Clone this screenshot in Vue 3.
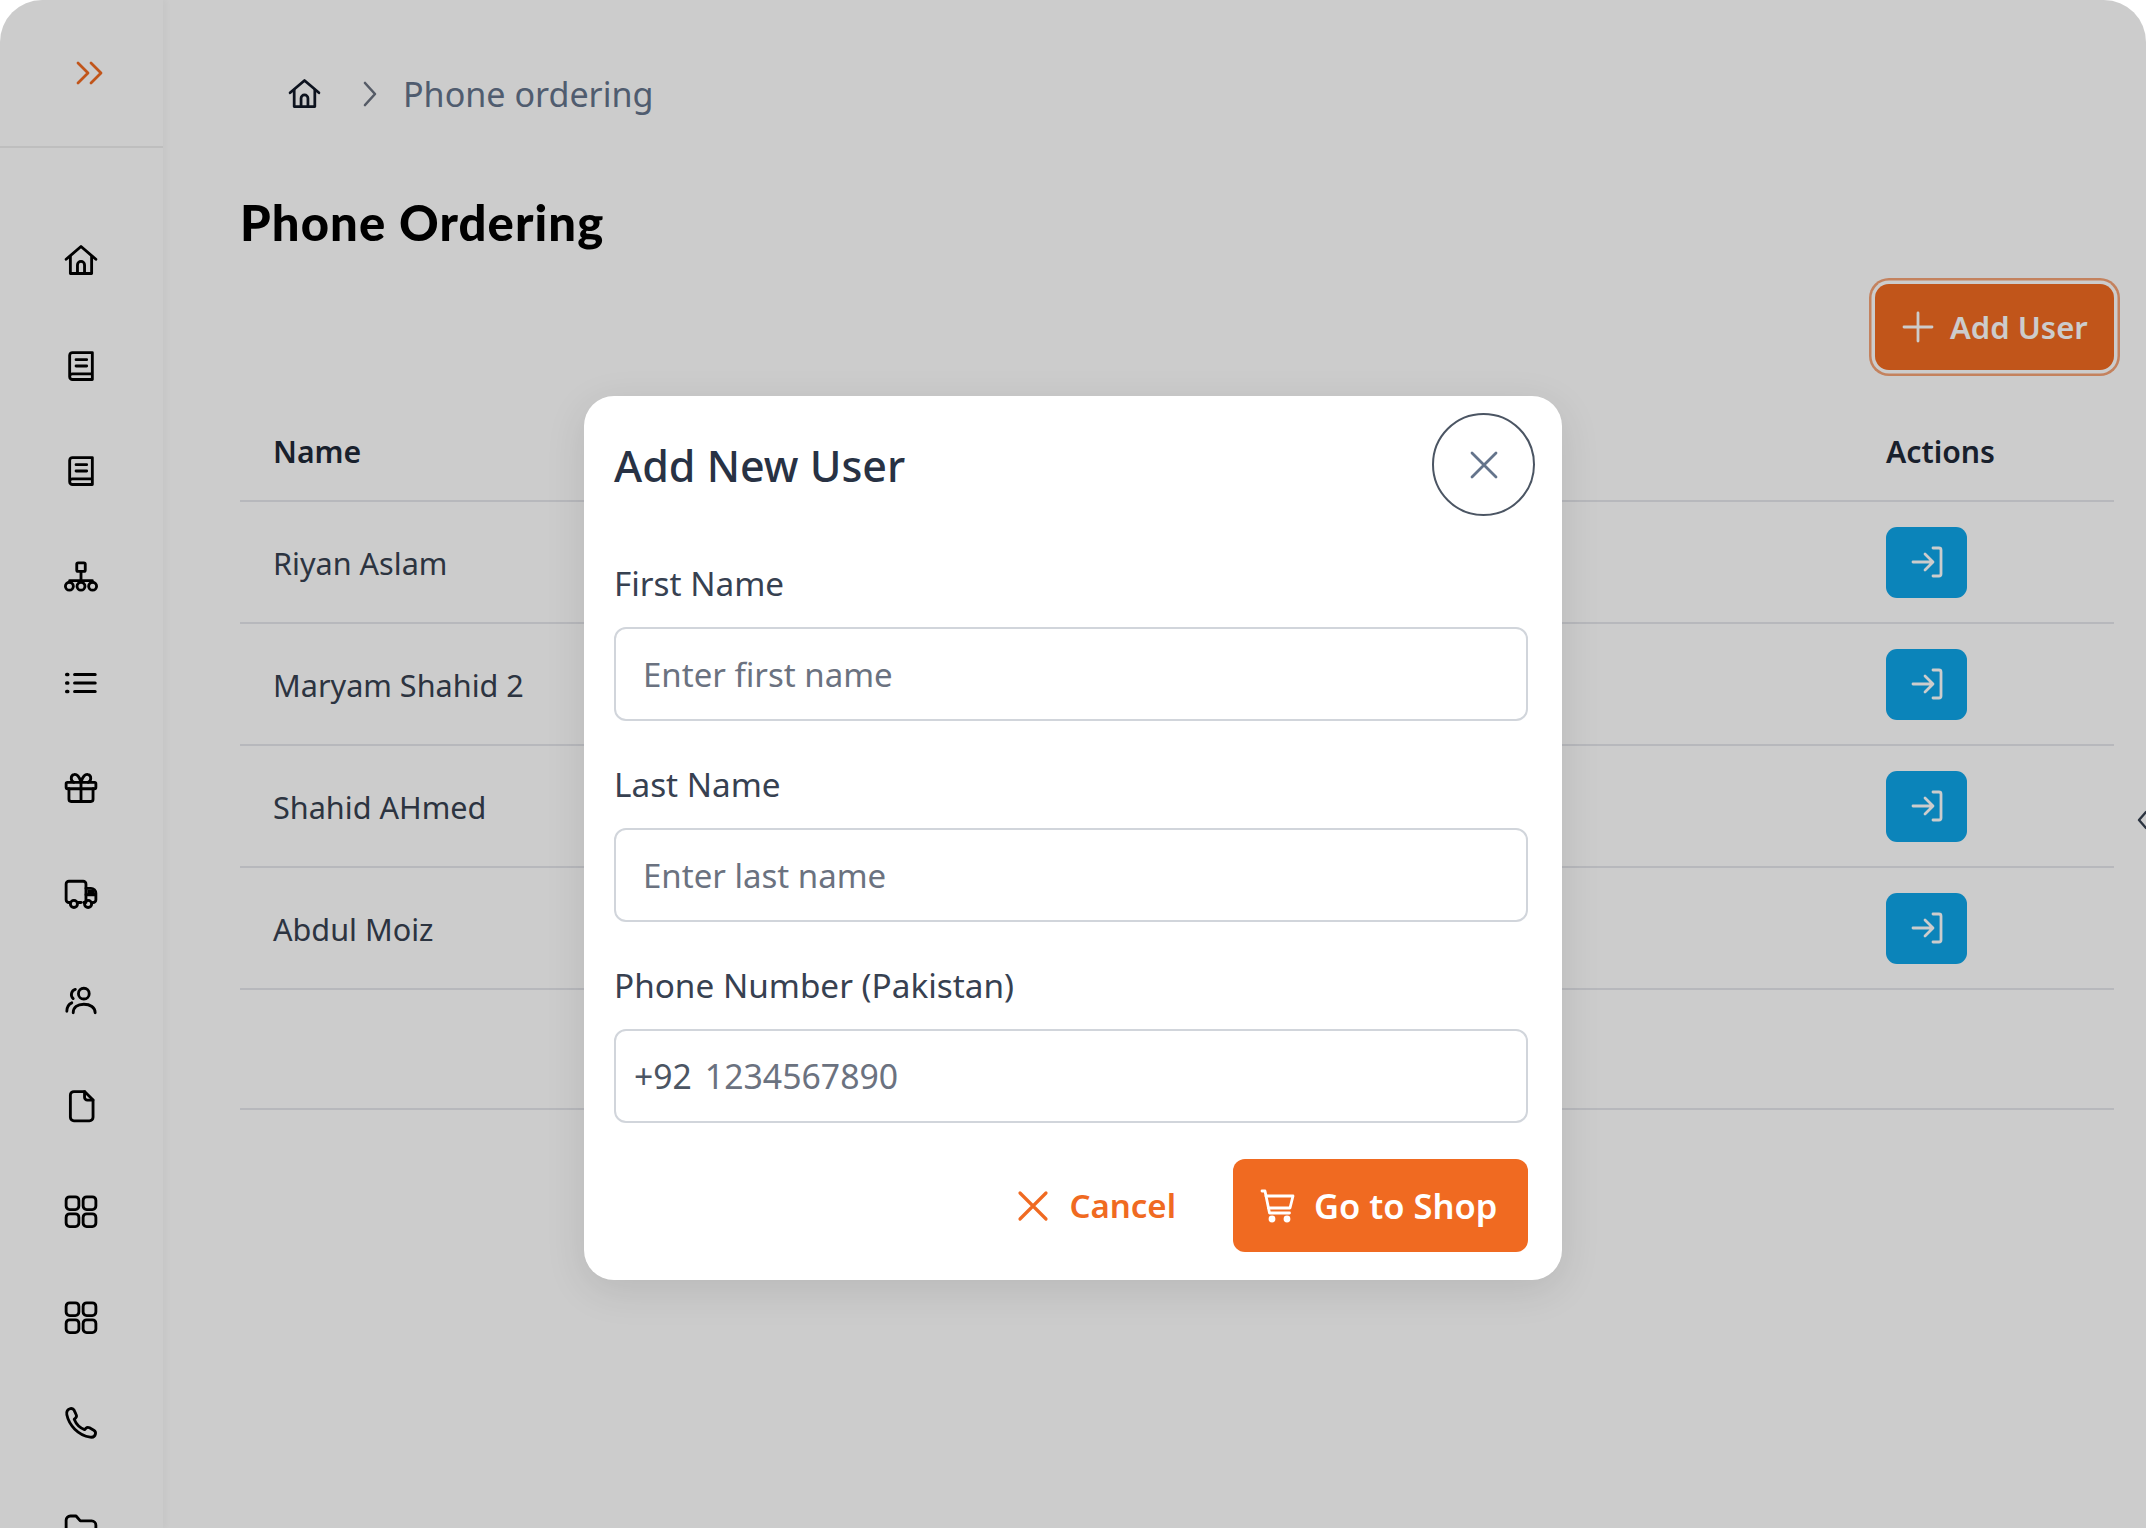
<script setup>
const navIcons = ['home', 'book', 'book', 'network', 'list', 'gift', 'truck', 'users', 'file', 'grid', 'grid', 'phone', 'folder']
const users = ['Riyan Aslam', 'Maryam Shahid 2', 'Shahid AHmed', 'Abdul Moiz']
</script>

<template>
  <div class="page">
    <aside class="sidebar">
      <div class="side-head">
        <svg class="chev" viewBox="0 0 33 26" fill="none" stroke="currentColor" stroke-width="2.800" stroke-linecap="round" stroke-linejoin="round">
          <path d="M4 3l10 10L4 23M17 3l10 10-10 10" />
        </svg>
      </div>
      <nav class="nav">
        <svg v-for="(n, i) in navIcons" :key="i" class="nav-icon" viewBox="0 0 24 24" fill="none" stroke="currentColor" stroke-width="2" stroke-linecap="round" stroke-linejoin="round">
          <template v-if="n === 'home'">
            <path d="M1.500 11.500 12 2.500l10.500 9" />
            <path d="M4.500 9.500v12h15v-12" />
            <path d="M9.500 21.500v-6a2.500 2.500 0 0 1 5 0v6" />
          </template>
          <template v-else-if="n === 'book'">
            <path d="M4 19.500v-15A2 2 0 0 1 6 2.500h14v19H6a2 2 0 0 1-2-2Zm0 0a2 2 0 0 1 2-2h14" />
            <path d="M8.500 7.500h7.500M8.500 12h7.500" />
          </template>
          <template v-else-if="n === 'network'">
            <rect x="9" y="2" width="6" height="6" rx="1" />
            <path d="M12 8v6.500M4 15.500v-1h16v1" />
            <circle cx="3.800" cy="18.500" r="2.800" />
            <circle cx="12" cy="18.500" r="2.800" />
            <circle cx="20.200" cy="18.500" r="2.800" />
          </template>
          <template v-else-if="n === 'list'">
            <path d="M7.500 6h14.500M7.500 12h14.500M7.500 18h14.500" stroke-width="2.200" />
            <path d="M2 6h.6M2 12h.6M2 18h.6" stroke-width="2.600" />
          </template>
          <template v-else-if="n === 'gift'">
            <rect x="1.500" y="8" width="21" height="4.500" rx="1" />
            <path d="M3.500 12.500V20a1.500 1.500 0 0 0 1.500 1.500h14a1.500 1.500 0 0 0 1.500-1.500v-7.500M12 8v13.500" />
            <path d="M12 8C11 4 9 2 7 2.500 4.500 3 4.500 7 7 8M12 8c1-4 3-6 5-5.500 2.500.5 2.500 4.500 0 5.500" />
          </template>
          <template v-else-if="n === 'truck'">
            <path d="M4.500 18H3.500A2 2 0 0 1 1.500 16V5A2 2 0 0 1 3.500 3h10a2 2 0 0 1 2 2v13h-1.500M9.500 18H12" />
            <path d="M15.500 8h3.500a3.500 3.500 0 0 1 3.500 3.500V16a2 2 0 0 1-2 2M15.500 12.500h7" />
            <path d="M16.500 9h4.500l1 3h-5.500Z" fill="currentColor" stroke="none" />
            <circle cx="7" cy="19" r="2.500" />
            <circle cx="17" cy="19" r="2.500" />
          </template>
          <template v-else-if="n === 'users'">
            <circle cx="14" cy="7.500" r="3.800" />
            <path d="M6.500 21c0-3.800 3-6 7.500-6s8 2.200 8 6" />
            <path d="M8 4.500a3.800 3.800 0 0 0-1.500 6.500M2 20c0-3 1.200-5 3.500-6" />
          </template>
          <template v-else-if="n === 'file'">
            <path d="M7 1.800h7.500l6 6V20a2.500 2.500 0 0 1-2.500 2.500H7A2.500 2.500 0 0 1 4.500 20V4.300A2.500 2.500 0 0 1 7 1.800Z" />
            <path d="M14.500 1.800v4a2 2 0 0 0 2 2h4" />
          </template>
          <template v-else-if="n === 'grid'">
            <rect x="1.500" y="2" width="9" height="9" rx="2.500" />
            <rect x="13.500" y="2" width="9" height="9" rx="2.500" />
            <rect x="1.500" y="14" width="9" height="9" rx="2.500" />
            <rect x="13.500" y="14" width="9" height="9" rx="2.500" />
          </template>
          <template v-else-if="n === 'phone'">
            <path d="M4.500 1.800C2.500 2.200 1.500 4 2 6.200c1.500 7.300 8 14.500 16.500 15.800 1.800.3 3.300-.5 3.700-2.300.3-1.200-.2-2-1.200-2.600l-3-1.700c-1-.5-1.800-.4-2.500.3l-1 1c-3.200-1.200-6-4-7.300-7.300l1-1c.7-.7.8-1.600.3-2.500L7 2.800c-.6-.8-1.500-1.200-2.500-1Z" />
          </template>
          <template v-else>
            <path d="M1.500 6.500a3 3 0 0 1 3-3h4l3 3.500h8a3 3 0 0 1 3 3v9a3 3 0 0 1-3 3h-15a3 3 0 0 1-3-3Z" />
          </template>
        </svg>
      </nav>
    </aside>

    <main class="main">
      <div class="crumbs">
        <svg class="crumb-home" viewBox="0 0 24 24" fill="none" stroke="currentColor" stroke-width="2" stroke-linecap="round" stroke-linejoin="round">
          <path d="M1.500 11.500 12 2.500l10.500 9" />
          <path d="M4.500 9.500v12h15v-12" />
          <path d="M9.500 21.500v-6a2.500 2.500 0 0 1 5 0v6" />
        </svg>
        <svg class="crumb-sep" viewBox="0 0 16 28" fill="none" stroke="currentColor" stroke-width="2.600" stroke-linecap="round" stroke-linejoin="round">
          <path d="M3 3l10 11L3 25" />
        </svg>
        <span class="crumb-text">Phone ordering</span>
      </div>

      <h1 class="title">Phone Ordering</h1>

      <div class="toolbar">
        <button class="add-btn" type="button">
          <svg viewBox="0 0 32 32" fill="none" stroke="currentColor" stroke-width="2.800" stroke-linecap="round">
            <path d="M16 2v28M2 16h28" />
          </svg>
          <span>Add User</span>
        </button>
      </div>

      <div class="table">
        <div class="row head">
          <span class="name">Name</span>
          <span class="actions">Actions</span>
        </div>
        <div v-for="u in users" :key="u" class="row">
          <span class="name">{{ u }}</span>
          <span class="actions">
            <button class="login-btn" type="button">
              <svg viewBox="0 0 32 32" fill="none" stroke="currentColor" stroke-width="2.800" stroke-linecap="round" stroke-linejoin="round">
                <path d="M2 16h19M14 8l8 8-8 8M22 2h6a2 2 0 0 1 2 2v24a2 2 0 0 1-2 2h-6" />
              </svg>
            </button>
          </span>
        </div>
        <div class="row empty"></div>
      </div>
    </main>

    <svg class="edge-chev" viewBox="0 0 12 20" fill="none" stroke="currentColor" stroke-width="2.400" stroke-linecap="round" stroke-linejoin="round">
      <path d="M9 2l-7 8 7 8" />
    </svg>

    <div class="scrim">
      <section class="modal">
        <header class="modal-head">
          <h2>Add New User</h2>
          <button class="close" type="button">
            <svg viewBox="0 0 30 30" fill="none" stroke="currentColor" stroke-width="2.800" stroke-linecap="round">
              <path d="M3 3l24 24M27 3L3 27" />
            </svg>
          </button>
        </header>
        <div class="fields">
          <label class="field">
            <span>First Name</span>
            <input type="text" placeholder="Enter first name" />
          </label>
          <label class="field">
            <span>Last Name</span>
            <input type="text" placeholder="Enter last name" />
          </label>
          <label class="field">
            <span>Phone Number (Pakistan)</span>
            <div class="phone-input">
              <b>+92</b>
              <input type="tel" placeholder="1234567890" />
            </div>
          </label>
        </div>
        <footer class="modal-foot">
          <button class="cancel" type="button">
            <svg viewBox="0 0 32 32" fill="none" stroke="currentColor" stroke-width="3.200" stroke-linecap="round">
              <path d="M3 3l26 26M29 3L3 29" />
            </svg>
            <span>Cancel</span>
          </button>
          <button class="shop" type="button">
            <svg viewBox="0 0 36 36" fill="none" stroke="currentColor" stroke-width="2.800" stroke-linecap="round" stroke-linejoin="round">
              <path d="M2 3h3l4.500 22h20" />
              <path d="M6 8h27l-3 12H8.500" />
              <circle cx="12" cy="31" r="2" fill="currentColor" />
              <circle cx="27" cy="31" r="2" fill="currentColor" />
            </svg>
            <span>Go to Shop</span>
          </button>
        </footer>
      </section>
    </div>
  </div>
</template>

<style>
html, body { margin: 0; background: #fff; overflow: hidden; }
</style>

<style scoped>
* { box-sizing: border-box; }
button { font: inherit; border: 0; background: none; padding: 0; }
.page {
  position: relative;
  display: flex;
  width: 100vw;
  height: 100vh;
  overflow: hidden;
  background: #fff;
  border-radius: 42px 42px 0 0;
  font-family: "Noto Sans", "Open Sans", sans-serif;
  color: #374151;
}
.sidebar {
  flex: 0 0 163px;
  box-shadow: 3px 0 6px rgba(0, 0, 0, 0.03);
}
.side-head {
  height: 148px;
  border-bottom: 2px solid #eeeeee;
  padding: 60px 0 0 74px;
  color: #f26b21;
}
.chev { display: block; width: 33px; height: 26px; }
.nav {
  display: flex;
  flex-direction: column;
  align-items: flex-start;
  gap: 71.700px;
  padding: 95px 0 0 64px;
}
.nav-icon { flex: none; width: 34px; height: 34px; color: #000; }
.main {
  flex: 1;
  min-width: 0;
  padding: 0 32px 0 77px;
}
.crumbs {
  display: flex;
  align-items: center;
  height: 70px;
  margin-top: 59px;
  padding-left: 48px;
  color: #6b7280;
}
.crumb-home { width: 33px; height: 33px; color: #111827; margin-top: -1px; }
.crumb-sep { width: 16px; height: 28px; margin-left: 41px; color: #6b7280; }
.crumb-text { margin-left: 25px; font-size: 34.100px; line-height: 44px; color: #64748b; }
.title {
  margin: 56px 0 0;
  font-family: Lato, "Noto Sans", sans-serif;
  font-size: 49px;
  line-height: 74px;
  letter-spacing: 1.100px;
  font-weight: 900;
  color: #000;
}
.toolbar {
  display: flex;
  justify-content: flex-end;
  margin-top: 25px;
}
.add-btn {
  display: flex;
  align-items: center;
  gap: 16px;
  width: 239px;
  height: 86px;
  padding-left: 27px;
  border-radius: 14px;
  background: #f26b21;
  color: #fff;
  font-size: 31px;
  font-weight: 600;
  box-shadow: 0 0 0 3.500px #fff, 0 0 0 6px #f6a376;
}
.add-btn svg { width: 32px; height: 32px; }
.table { margin-top: 31px; }
.row {
  display: flex;
  align-items: center;
  justify-content: space-between;
  height: 122px;
  border-bottom: 2px solid #e5e7eb;
  font-size: 30.600px;
  color: #374151;
}
.row.head { height: 101px; font-weight: 600; color: #1f2937; font-size: 30.200px; }
.row.empty { height: 120px; }
.name { padding: 2px 0 0 33px; }
.head .actions { padding-top: 2px; }
.actions { flex: 0 0 228px; display: flex; }
.login-btn {
  display: flex;
  align-items: center;
  justify-content: center;
  width: 81px;
  height: 71px;
  border-radius: 11px;
  background: #0ea5e9;
  color: #fff;
}
.login-btn svg { width: 32px; height: 32px; }
.edge-chev {
  position: absolute;
  left: 2137px;
  top: 810px;
  width: 12px;
  height: 20px;
  color: #374151;
}
.scrim {
  position: absolute;
  inset: 0;
  display: flex;
  justify-content: center;
  align-items: flex-start;
  padding-top: 396px;
  background: rgba(0, 0, 0, 0.2);
}
.modal {
  width: 978px;
  height: 884px;
  padding: 17px 34px 28px 30px;
  border-radius: 30px;
  background: #fff;
  box-shadow: 0 10px 40px rgba(0, 0, 0, 0.1);
}
.modal-head {
  display: flex;
  align-items: center;
  justify-content: space-between;
  height: 103px;
}
.modal-head h2 {
  margin: 2px 0 0;
  font-size: 43px;
  font-weight: 500;
  color: #283244;
}
.close {
  display: flex;
  align-items: center;
  justify-content: center;
  width: 103px;
  height: 103px;
  margin-right: -7px;
  border: 2px solid #4b5563;
  border-radius: 50%;
  color: #64748b;
}
.close svg { width: 30px; height: 30px; }
.fields {
  display: flex;
  flex-direction: column;
  gap: 41px;
  margin-top: 45px;
}
.field { display: flex; flex-direction: column; gap: 22px; }
.field > span {
  font-size: 33.300px;
  line-height: 44px;
  color: #374151;
}
.field input {
  width: 100%;
  height: 94px;
  padding: 0 27px;
  border: 2.500px solid #d1d5db;
  border-radius: 12px;
  font: inherit;
  font-size: 33px;
  color: #374151;
  background: #fff;
  outline: none;
}
.field input::placeholder { color: #6b7280; opacity: 1; }
.phone-input {
  display: flex;
  align-items: center;
  height: 94px;
  padding-left: 18px;
  border: 2.500px solid #d1d5db;
  border-radius: 12px;
}
.phone-input b { font-weight: 400; font-size: 33.700px; color: #4b5563; }
.field .phone-input input {
  flex: 1;
  height: 88px;
  padding: 0 0 0 13px;
  border: 0;
  font-size: 33.800px;
}
.modal-foot {
  display: flex;
  justify-content: flex-end;
  align-items: center;
  gap: 57px;
  margin-top: 36px;
}
.cancel {
  display: flex;
  align-items: center;
  gap: 20px;
  color: #f06a21;
  font-size: 33px;
  font-weight: 600;
}
.cancel svg { width: 32px; height: 32px; }
.shop {
  display: flex;
  align-items: center;
  gap: 18px;
  width: 295px;
  height: 93px;
  padding-left: 27px;
  border-radius: 12px;
  background: #f06a21;
  color: #fff;
  font-size: 34.500px;
  font-weight: 600;
}
.shop svg { width: 36px; height: 36px; }
</style>
